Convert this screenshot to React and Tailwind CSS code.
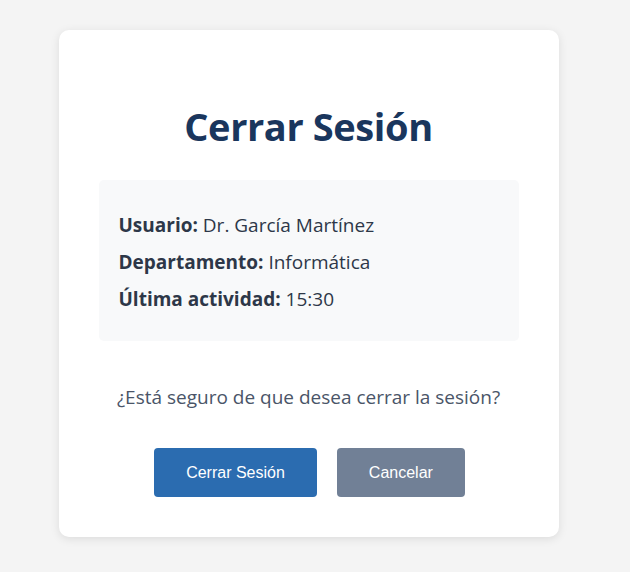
export default function App() {
  return (
    <div className="min-h-screen bg-[#f4f4f4] pt-[30px] font-['Open_Sans',sans-serif]">
      <div className="w-[617px]">
        <div className="mx-auto w-[500px] rounded-[10px] bg-white p-10 text-center shadow-[0_2px_10px_rgba(0,0,0,0.1)]">
          <h1 className="mt-[32px] mb-[30px] text-[38px] leading-[48px] font-bold tracking-[-0.4px] text-[#1a365d]">Cerrar Sesión</h1>
          <div className="rounded-[5px] bg-[#f8f9fa] px-5 pt-[22px] pb-[18px] text-left text-[19px] leading-[27px] text-[#2d3748]">
            <p className="my-[10px]"><strong>Usuario:</strong> Dr. García Martínez</p>
            <p className="my-[10px]"><strong>Departamento:</strong> Informática</p>
            <p className="my-[10px]"><strong>Última actividad:</strong> 15:30</p>
          </div>
          <p className="mt-[43px] text-[19px] leading-[27px] text-[#4a5568]">¿Está seguro de que desea cerrar la sesión?</p>
          <div className="mt-[37px] flex justify-center gap-5 pl-[2px] font-['Liberation_Sans',Arial,sans-serif] text-[16px] text-white">
            <button className="h-[49px] rounded-[4px] bg-[#2b6cb0] px-8">Cerrar Sesión</button>
            <button className="h-[49px] rounded-[4px] bg-[#718096] px-8">Cancelar</button>
          </div>
        </div>
      </div>
    </div>
  );
}
